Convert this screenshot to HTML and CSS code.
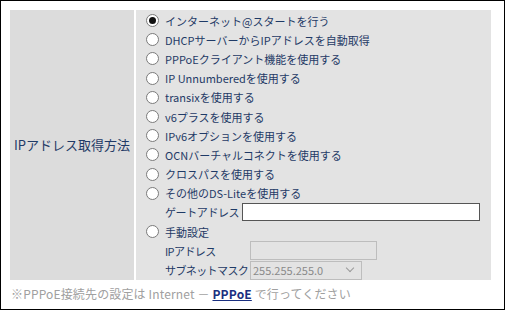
FILE: index.html
```html
<!DOCTYPE html>
<html lang="ja">
<head>
    <meta charset="UTF-8">
    <title>IPアドレス取得方法</title>
    <link rel="stylesheet" href="styles.css">
</head>
<body>
<div class="frame">
    <div class="setting">
        <div class="label">IPアドレス取得方法</div>
        <div class="options">
            <label class="row"><input type="radio" name="ipmode" checked>インターネット@スタートを行う</label>
            <label class="row"><input type="radio" name="ipmode">DHCPサーバーからIPアドレスを自動取得</label>
            <label class="row"><input type="radio" name="ipmode">PPPoEクライアント機能を使用する</label>
            <label class="row"><input type="radio" name="ipmode">IP Unnumberedを使用する</label>
            <label class="row"><input type="radio" name="ipmode">transixを使用する</label>
            <label class="row"><input type="radio" name="ipmode">v6プラスを使用する</label>
            <label class="row"><input type="radio" name="ipmode">IPv6オプションを使用する</label>
            <label class="row"><input type="radio" name="ipmode">OCNバーチャルコネクトを使用する</label>
            <label class="row"><input type="radio" name="ipmode">クロスパスを使用する</label>
            <label class="row"><input type="radio" name="ipmode">その他のDS-Liteを使用する</label>
            <div class="row sub">
                <span class="gatelabel">ゲートアドレス</span>
                <input type="text" class="gate">
            </div>
            <label class="row"><input type="radio" name="ipmode">手動設定</label>
            <div class="row sub">
                <span class="sublabel">IPアドレス</span>
                <input type="text" class="ipaddr" disabled>
            </div>
            <div class="row sub">
                <span class="sublabel">サブネットマスク</span>
                <div class="mask">255.255.255.0<span class="chev"></span></div>
            </div>
        </div>
    </div>
    <p class="note">※PPPoE接続先の設定は Internet － <a href="#">PPPoE</a> で行ってください</p>
</div>
</body>
</html>
```
FILE: styles.css
```css
html, body {
    margin: 0;
    padding: 0;
}

body {
    font-family: "Noto Sans CJK JP", "Liberation Sans", sans-serif;
    color: #1f3a66;
}

.frame {
    width: 505px;
    height: 310px;
    box-sizing: border-box;
    border: 1px solid #000;
    padding: 9px 13px 0 9px;
}

.setting {
    display: grid;
    grid-template-columns: 124px 1fr;
    column-gap: 2px;
    background: #fff;
    height: 269px;
}

.label {
    background: #dcdcdc;
    display: flex;
    align-items: center;
    padding-left: 4px;
    font-size: 13px;
}

.options {
    background: #e3e3e3;
    padding: 1px 0 0 10px;
    font-size: 11px;
}

.row {
    display: flex;
    align-items: center;
    height: 19.2px;
    white-space: nowrap;
}

.row input[type=radio] {
    appearance: none;
    -webkit-appearance: none;
    width: 13px;
    height: 13px;
    margin: 0 6px 0 0;
    border: 1px solid #7a7a7a;
    border-radius: 50%;
    background: #fff;
    box-sizing: border-box;
    display: grid;
    place-items: center;
}

.row input[type=radio]:checked::after {
    content: "";
    width: 7px;
    height: 7px;
    border-radius: 50%;
    background: #111;
}

.sub {
    padding-left: 19px;
}

.gatelabel {
    letter-spacing: -0.4px;
    margin-right: 3px;
}

.sublabel {
    width: 85px;
    letter-spacing: -0.6px;
}

.gate {
    width: 238px;
    height: 18px;
    box-sizing: border-box;
    border: 1px solid #555;
    margin: 0;
    background: #fff;
}

.ipaddr {
    width: 127px;
    height: 19px;
    box-sizing: border-box;
    border: 1px solid #bdbdbd;
    background: #e3e3e3;
    margin: 0;
}

.mask {
    width: 112px;
    height: 19px;
    box-sizing: border-box;
    border: 1px solid #bdbdbd;
    color: #8a8a8a;
    padding-left: 2px;
    display: flex;
    align-items: center;
    justify-content: space-between;
    font-size: 11px;
}

.chev {
    width: 5px;
    height: 5px;
    border-right: 1px solid #9a9a9a;
    border-bottom: 1px solid #9a9a9a;
    transform: rotate(45deg);
    margin: 0 8px 4px 0;
}

.note {
    margin: 6px 0 0 1px;
    font-size: 12px;
    color: #a0a0a0;
    letter-spacing: 0.15px;
}

.note a {
    color: #1a2f80;
    font-weight: bold;
}
```
